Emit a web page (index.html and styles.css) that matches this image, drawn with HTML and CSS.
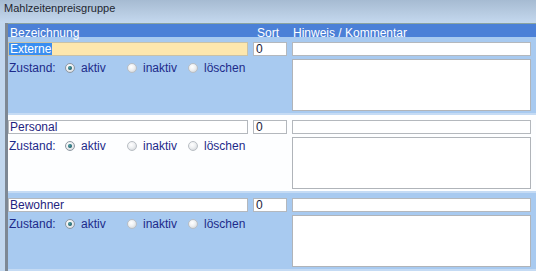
FILE: index.html
```html
<!DOCTYPE html>
<html lang="de">
<head>
<meta charset="utf-8">
<title>Mahlzeitenpreisgruppe</title>
<link rel="stylesheet" href="styles.css">
</head>
<body>
<div class="top">
  <div class="title">Mahlzeitenpreisgruppe</div>
</div>
<div class="panel">
  <div class="head">
    <span class="h-name">Bezeichnung</span>
    <span class="h-sort">Sort</span>
    <span class="h-note">Hinweis / Kommentar</span>
  </div>

  <div class="row blue">
    <div class="field name active"><span class="sel">Externe</span></div>
    <div class="field sort">0</div>
    <div class="field note"></div>
    <div class="state">
      <span class="lbl">Zustand:</span>
      <span class="opt o1"><span class="radio on"></span>aktiv</span>
      <span class="opt o2"><span class="radio"></span>inaktiv</span>
      <span class="opt"><span class="radio"></span>löschen</span>
    </div>
    <div class="field area"></div>
  </div>

  <div class="row white">
    <div class="field name">Personal</div>
    <div class="field sort">0</div>
    <div class="field note"></div>
    <div class="state">
      <span class="lbl">Zustand:</span>
      <span class="opt o1"><span class="radio on"></span>aktiv</span>
      <span class="opt o2"><span class="radio"></span>inaktiv</span>
      <span class="opt"><span class="radio"></span>löschen</span>
    </div>
    <div class="field area"></div>
  </div>

  <div class="row blue">
    <div class="field name">Bewohner</div>
    <div class="field sort">0</div>
    <div class="field note"></div>
    <div class="state">
      <span class="lbl">Zustand:</span>
      <span class="opt o1"><span class="radio on"></span>aktiv</span>
      <span class="opt o2"><span class="radio"></span>inaktiv</span>
      <span class="opt"><span class="radio"></span>löschen</span>
    </div>
    <div class="field area"></div>
  </div>
</div>
</body>
</html>
```

FILE: styles.css
```css
html, body {
  margin: 0;
  padding: 0;
}
body {
  width: 536px;
  height: 271px;
  overflow: hidden;
  font-family: "Liberation Sans", Arial, sans-serif;
  background: #c2d7ee;
}
.top {
  height: 23px;
  background: linear-gradient(#a6bbd2 0, #b9cde3 14px, #c4d8ef 23px);
}
.title {
  padding-left: 4px;
  font-size: 11px;
  line-height: 16px;
  color: #1e2630;
}
.panel {
  margin-left: 5px;
  border-left: 3px solid #7e8894;
}
.head {
  box-sizing: border-box;
  height: 14px;
  border-top: 1px solid #8aa3a0;
  background: #4b80d7;
  color: #fff;
  font-size: 12px;
  line-height: 14px;
  display: grid;
  grid-template-columns: 240px 34px 239px;
  column-gap: 5px;
}
.head span {
  display: block;
  height: 13px;
  padding-top: 2px;
  box-sizing: border-box;
}
.h-name { padding-left: 2px; }
.h-sort { padding-left: 4px; }
.h-note { padding-left: 1px; }

.row {
  box-sizing: border-box;
  height: 78px;
  padding-top: 5px;
  border-bottom: 2px solid #c5dbf4;
  display: grid;
  grid-template-columns: 240px 34px 239px;
  grid-template-rows: 14px 52px;
  column-gap: 5px;
  row-gap: 3px;
  align-content: start;
}
.row.blue { background: #a8caf0; }
.row.white { background: #fdfeff; }

.field {
  box-sizing: border-box;
  background: #fff;
  border: 1px solid #b4b8bd;
  font-size: 12px;
  line-height: 12px;
  color: #1f2480;
  padding-left: 1px;
  white-space: nowrap;
  overflow: hidden;
}
.field.name.active {
  background: #fde7ae;
  border-color: #c9c2a8;
  padding-left: 0;
}
.sel {
  display: inline-block;
  height: 12px;
  padding-left: 1px;
  padding-right: 1px;
  background: #3a8ef0;
  color: #fff;
}
.field.sort {
  padding-left: 2px;
  color: #1a1a3a;
}
.field.area {
  grid-column: 3;
  grid-row: 2;
  border-color: #b0b4b9;
}
.state {
  grid-column: 1 / 3;
  grid-row: 2;
  margin-top: 2px;
  display: flex;
  align-items: center;
  height: 14px;
  font-size: 12px;
  line-height: 14px;
  color: #1d2a8a;
}
.lbl {
  width: 57px;
  padding-left: 1px;
  box-sizing: border-box;
}
.opt {
  display: flex;
  align-items: center;
}
.o1 { width: 62px; }
.o2 { width: 61px; }
.radio {
  box-sizing: border-box;
  width: 10px;
  height: 10px;
  margin-right: 6px;
  border-radius: 50%;
  border: 1px solid #b9bec4;
  background: radial-gradient(circle at 40% 35%, #ffffff 0, #eef0f2 45%, #c9cdd2 100%);
  position: relative;
}
.radio.on {
  border-color: #8e98a2;
}
.radio.on::after {
  content: "";
  position: absolute;
  left: 2px;
  top: 2px;
  width: 4px;
  height: 4px;
  border-radius: 50%;
  background: radial-gradient(circle at 40% 40%, #4fa3a8 0, #1a5a66 70%, #0f3d48 100%);
}
```
